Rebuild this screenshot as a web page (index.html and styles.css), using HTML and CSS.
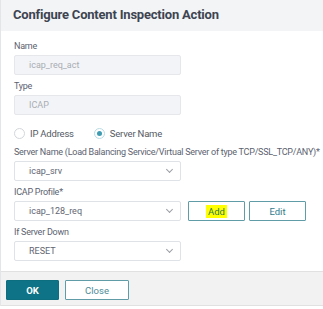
FILE: index.html
```html
<!DOCTYPE html>
<html lang="en">
<head>
    <meta charset="UTF-8">
    <title>Configure Content Inspection Action</title>
    <link rel="stylesheet" href="styles.css">
</head>
<body>
    <div class="dialog">
        <div class="dialog-header">Configure Content Inspection Action</div>

        <div class="dialog-body">
            <div class="field first">
                <label class="field-label">Name</label>
                <div class="input disabled">icap_req_act</div>
            </div>
            <div class="field">
                <label class="field-label">Type</label>
                <div class="input disabled">ICAP</div>
            </div>

            <div class="radio-row">
                <span class="radio"></span>
                <span class="radio-label">IP Address</span>
                <span class="radio checked"></span>
                <span class="radio-label">Server Name</span>
            </div>

            <div class="field">
                <label class="field-label">Server Name (Load Balancing Service/Virtual Server of type TCP/SSL_TCP/ANY)*</label>
                <div class="input select">icap_srv<span class="chevron"></span></div>
            </div>
            <div class="field">
                <label class="field-label">ICAP Profile*</label>
                <div class="input-row">
                    <div class="input select">icap_128_req<span class="chevron"></span></div>
                    <button class="btn btn-outline"><span class="highlight">Add</span></button>
                    <button class="btn btn-outline">Edit</button>
                </div>
            </div>
            <div class="field">
                <label class="field-label">If Server Down</label>
                <div class="input select">RESET<span class="chevron"></span></div>
            </div>
        </div>

        <div class="dialog-footer">
            <button class="btn btn-primary">OK</button>
            <button class="btn btn-close">Close</button>
        </div>
    </div>
</body>
</html>
```

FILE: styles.css
```css
/* Page */
body {
    margin: 0;
    padding: 0;
    background-color: #fff;
    font-family: 'Roboto', 'Liberation Sans', sans-serif;
    color: #545a64;
}

.dialog {
    width: 323px;
    border-left: 1px solid #e3e5e8;
    box-sizing: border-box;
}

/* Header */
.dialog-header {
    height: 31px;
    box-sizing: border-box;
    padding: 7px 0 0 12px;
    background-color: #f3f4f6;
    font-size: 13px;
    font-weight: 700;
    letter-spacing: -0.2px;
    color: #3d4451;
}

/* Body */
.dialog-body {
    padding: 4px 0 10px 13px;
}

.field {
    margin-top: 5px;
}

.field-label {
    display: block;
    height: 12px;
    line-height: 12px;
    margin-bottom: 3px;
    font-size: 9px;
    letter-spacing: -0.25px;
    color: #5c6270;
    white-space: nowrap;
}

.input {
    position: relative;
    width: 167px;
    height: 20px;
    box-sizing: border-box;
    padding-left: 14px;
    border: 1px solid #dfe2e6;
    border-radius: 2px;
    font-size: 9px;
    line-height: 18px;
    color: #5f6672;
}

.input.disabled {
    background-color: #f3f4f7;
    border-color: #e5e7ea;
    color: #a9adb4;
}

.chevron {
    position: absolute;
    right: 8px;
    top: 5px;
    width: 4px;
    height: 4px;
    border-right: 1px solid #9a9fa6;
    border-bottom: 1px solid #9a9fa6;
    transform: rotate(45deg);
}

.input-row {
    display: flex;
    align-items: center;
}

/* Radios */
.radio-row {
    display: flex;
    align-items: center;
    height: 16px;
    margin-top: 10px;
    margin-bottom: 1px;
}

.radio {
    width: 11px;
    height: 11px;
    box-sizing: border-box;
    border: 1px solid #d3d6da;
    border-radius: 50%;
    position: relative;
}

.radio.checked {
    margin-left: 20px;
    border-color: #b9dbe3;
}

.radio.checked::after {
    content: "";
    position: absolute;
    left: 2px;
    top: 2px;
    width: 5px;
    height: 5px;
    border-radius: 50%;
    background-color: #3f9bb1;
}

.radio-label {
    margin-left: 5px;
    font-size: 9.5px;
    letter-spacing: -0.2px;
    color: #545a64;
}

/* Buttons */
.btn {
    height: 20px;
    box-sizing: border-box;
    padding: 0;
    border-radius: 1px;
    font-family: 'Roboto', 'Liberation Sans', sans-serif;
    font-size: 9.5px;
    cursor: pointer;
}

.btn-outline {
    width: 57px;
    margin-left: 7px;
    border: 1px solid #5f9ca7;
    background-color: #fff;
    color: #2f7c8d;
}

.btn-outline + .btn-outline {
    margin-left: 4px;
}

.highlight {
    background-color: #ffff00;
    padding: 1px 2px;
    color: #2c7a55;
}

/* Footer */
.dialog-footer {
    height: 35px;
    box-sizing: border-box;
    padding: 8px 0 0 5px;
    background-color: #f2f2f2;
    border-top: 1px solid #e1e1e1;
    border-bottom: 1px solid #e1e1e1;
    display: flex;
    align-items: flex-start;
}

.btn-primary {
    width: 53px;
    border: 1px solid #0d6e80;
    background-color: #0e7386;
    color: #fff;
    font-weight: 700;
}

.btn-close {
    width: 64px;
    margin-left: 6px;
    border: 1px solid #5f9ca7;
    background-color: #fff;
    color: #4d8b98;
}
```
